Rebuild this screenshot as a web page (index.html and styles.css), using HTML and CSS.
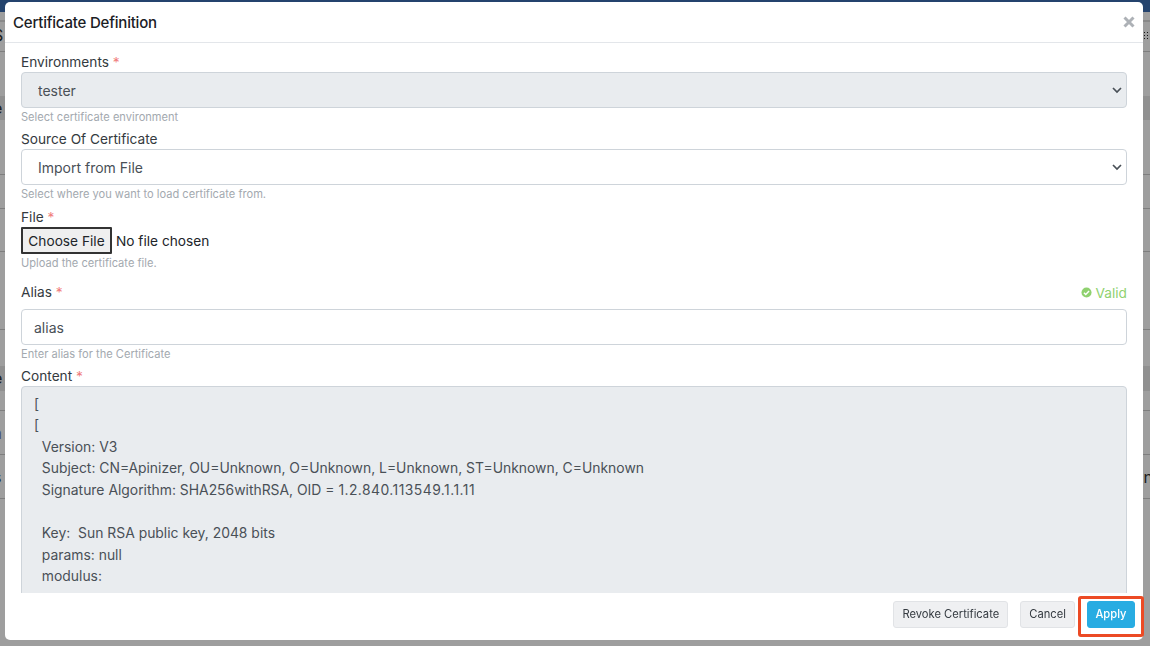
FILE: index.html
```html
<!DOCTYPE html>
<html lang="en">
<head>
    <meta charset="UTF-8">
    <meta name="viewport" content="width=device-width, initial-scale=1.0">
    <title>Certificate Definition</title>
    <link rel="stylesheet" href="styles.css">
</head>
<body>
    <!-- page behind the dialog, only its edges show -->
    <div class="page">
        <div class="topbar"></div>
        <div class="row row-toolbar"><span>S</span><span class="grid-icon"></span></div>
        <div class="row row-head"><span>e</span></div>
        <div class="row row-a"></div>
        <div class="row row-b"></div>
        <div class="row row-c"></div>
        <div class="row row-d"></div>
        <div class="row row-head2"><span>e</span></div>
        <div class="row row-e"><span class="link">a</span></div>
        <div class="row row-f"><span>s</span><span>n</span></div>
    </div>
    <div class="backdrop"></div>

    <div class="modal">
        <div class="modal-header">
            <h5 class="modal-title">Certificate Definition</h5>
            <button class="close" aria-label="Close">
                <svg viewBox="0 0 14 14" width="14" height="14"><path d="M2.5 2.5l9 9M11.5 2.5l-9 9" fill="none" stroke="currentColor" stroke-width="3"/></svg>
            </button>
        </div>
        <div class="modal-body">
            <div class="form-group">
                <label>Environments <span class="req">*</span></label>
                <select class="form-control" disabled><option>tester</option></select>
                <small>Select certificate environment</small>
            </div>
            <div class="form-group">
                <label>Source Of Certificate</label>
                <select class="form-control"><option>Import from File</option></select>
                <small>Select where you want to load certificate from.</small>
            </div>
            <div class="form-group file-group">
                <label>File <span class="req">*</span></label>
                <input type="file" class="file-input">
                <small>Upload the certificate file.</small>
            </div>
            <div class="form-group alias-group">
                <div class="label-row">
                    <label>Alias <span class="req">*</span></label>
                    <span class="valid">
                        <svg viewBox="0 0 12 12" width="11" height="11"><circle cx="6" cy="6" r="5.5" fill="currentColor"/><path d="M3.2 6.2l2 2 3.6-3.8" fill="none" stroke="#fff" stroke-width="1.6"/></svg>
                        Valid
                    </span>
                </div>
                <input type="text" class="form-control" value="alias">
                <small>Enter alias for the Certificate</small>
            </div>
            <div class="form-group">
                <label>Content <span class="req">*</span></label>
                <div class="form-control content">[
[
  Version: V3
  Subject: CN=Apinizer, OU=Unknown, O=Unknown, L=Unknown, ST=Unknown, C=Unknown
  Signature Algorithm: SHA256withRSA, OID = <span class="oid">1.2.840.113549.1.1.11</span>

  Key:  Sun RSA public key, 2048 bits
  params: null
  modulus:</div>
            </div>
        </div>
        <div class="modal-footer">
            <button class="btn">Revoke Certificate</button>
            <button class="btn">Cancel</button>
            <button class="btn btn-primary">Apply</button>
        </div>
    </div>
    <div class="highlight"></div>
</body>
</html>
```

FILE: styles.css
```css
* {
    box-sizing: border-box;
}
html, body {
    height: 100%;
}
body {
    margin: 0;
    overflow: hidden;
    font-family: Inter, "Liberation Sans", sans-serif;
    font-size: 14px;
    color: #212529;
    background-color: #fff;
}

/* page behind */
.page {
    height: 646px;
    overflow: hidden;
    font-size: 16px;
    color: #333;
}
.topbar {
    height: 12px;
    background-color: #3a6db0;
}
.row {
    display: flex;
    justify-content: space-between;
    align-items: center;
    padding: 0 4px 0 0;
    border-bottom: 1px solid #ccc;
    margin-left: -7px;
    margin-right: -7px;
}
.row-toolbar { border-top: 2px solid #ddd; margin-top: 8px; height: 32px; padding-bottom: 4px; }
.row-head { height: 68px; border-bottom: none; background: linear-gradient(#fff 44px, #e9e9e9 44px); align-items: flex-end; padding-bottom: 2px; }
.row-a { height: 55px; }
.row-b { height: 34px; }
.row-c { height: 43px; }
.row-d { height: 78px; }
.row-head2 { height: 81px; background: linear-gradient(#fff 36px, #e9e9e9 36px, #e9e9e9 61px, #fff 61px); padding-top: 16px; }
.row-e { height: 44px; }
.row-f { height: 44px; }
.link {
    color: #7a8ac0;
}
.grid-icon {
    width: 9px;
    height: 8px;
    margin-right: 4px;
    background-image: radial-gradient(#222 1px, transparent 1px);
    background-size: 3px 3px;
}
.backdrop {
    position: fixed;
    inset: 0;
    background-color: rgba(0, 0, 0, 0.38);
}

/* dialog */
.modal {
    position: fixed;
    left: 5px;
    top: 2px;
    width: 1138px;
    height: 638px;
    display: flex;
    flex-direction: column;
    background-color: #fff;
    border-radius: 5px;
}
.modal-header {
    height: 41px;
    flex-shrink: 0;
    display: flex;
    align-items: center;
    justify-content: space-between;
    padding: 0 7px 0 8px;
    border-bottom: 1px solid #e3e6ea;
}
.modal-title {
    margin: 0;
    font-size: 15px;
    font-weight: 500;
    letter-spacing: -0.2px;
    color: #1b2025;
}
.close {
    padding: 0;
    border: none;
    background: none;
    color: #adb1b6;
    display: flex;
}
.modal-body {
    flex: 1;
    min-height: 0;
    overflow: hidden;
    padding: 10px 16px 0;
}
.modal-footer {
    height: 47px;
    flex-shrink: 0;
    display: flex;
    justify-content: flex-end;
    align-items: flex-start;
    gap: 12px;
    padding: 8px 8px 0 0;
}

/* form */
.form-group {
    margin-bottom: 6px;
}
label {
    display: block;
    height: 19px;
    line-height: 18px;
    font-size: 13.7px;
    color: #343a40;
}
.req {
    color: #f07c7c;
}
.form-control {
    display: block;
    width: 100%;
    height: 36px;
    padding: 0 12px;
    font-family: inherit;
    font-size: 14px;
    color: #495057;
    background-color: #fff;
    border: 1px solid #ced4da;
    border-radius: 4px;
}
select.form-control {
    appearance: none;
    padding-left: 16px;
    background-image: url("data:image/svg+xml,%3Csvg xmlns='http://www.w3.org/2000/svg' width='10' height='7'%3E%3Cpath d='M1 1l4 4 4-4' fill='none' stroke='%23495057' stroke-width='1.7'/%3E%3C/svg%3E");
    background-repeat: no-repeat;
    background-position: right 4px center;
}
.form-control:disabled {
    background-color: #e9ecef;
    opacity: 1;
}
small {
    display: block;
    height: 16px;
    line-height: 18px;
    font-size: 11.1px;
    color: #a3a9af;
}
.file-group label {
    height: 20px;
    line-height: 20px;
}
.file-input {
    display: block;
    height: 27px;
    font-family: inherit;
    font-size: 13.7px;
    color: #212529;
}
.file-input::file-selector-button {
    height: 27px;
    width: 91px;
    margin-right: 4px;
    padding: 0;
    font-family: inherit;
    font-size: 13.7px;
    color: #212529;
    background-color: #efefef;
    border: 2px solid #333;
    border-radius: 1px;
}
.alias-group {
    margin-top: 13px;
}
.label-row {
    display: flex;
    justify-content: space-between;
    height: 26px;
}
.valid {
    display: flex;
    align-items: center;
    gap: 4px;
    height: 19px;
    font-size: 13.7px;
    color: #8fd16f;
}
.content {
    height: 300px;
    padding: 6.6px 12px;
    font-size: 13.9px;
    line-height: 21.6px;
    white-space: pre;
    overflow: hidden;
    background-color: #e9ecef;
}
.oid {
    letter-spacing: 0.45px;
}

/* buttons */
.btn {
    height: 27px;
    padding: 0 8px 1px;
    font-family: inherit;
    font-size: 11.2px;
    color: #343a40;
    background-color: #eff0f2;
    border: 1px solid #e1e3e6;
    border-radius: 3px;
}
.btn-primary {
    padding: 0 7.5px 1px;
    color: #fff;
    font-weight: 500;
    background-color: #28ace2;
    border-color: #28ace2;
}
.highlight {
    position: fixed;
    left: 1078px;
    top: 596px;
    width: 66px;
    height: 41px;
    border: 3px solid #ec4a24;
    border-radius: 3px;
}
```
